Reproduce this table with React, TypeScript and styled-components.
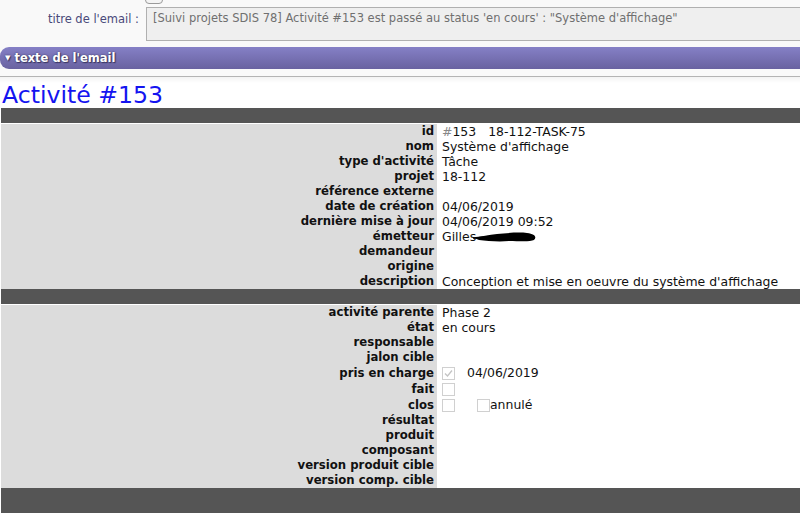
import React from 'react';
import styled, { createGlobalStyle } from 'styled-components';

const GlobalStyle = createGlobalStyle`
  html, body { margin: 0; padding: 0; background: #fff; }
  body { font-family: "DejaVu Sans", Verdana, sans-serif; overflow: hidden; }
`;

type Row = { label: string; value?: React.ReactNode; tall?: boolean };

const Page = styled.div`
  width: 800px;
  height: 513px;
  overflow: hidden;
`;

const Header = styled.div`
  background: #f9f9f9;
  height: 76px;
  border-bottom: 1px solid #b4b4b4;
  position: relative;
`;

const TopButton = styled.div`
  position: absolute;
  left: 145px;
  top: -8px;
  width: 16px;
  height: 10px;
  border: 1px solid #9a9a9a;
  border-radius: 4px;
  background: #f4f4f4;
`;

const FieldRow = styled.div`
  display: flex;
  align-items: flex-start;
  padding-top: 7px;
`;

const FieldLabel = styled.div`
  width: 139px;
  text-align: right;
  padding-right: 7px;
  padding-top: 5px;
  font-size: 11.5px;
  color: #4a4a7a;
  white-space: nowrap;
`;

const FieldBox = styled.div`
  flex: 1;
  height: 34px;
  box-sizing: border-box;
  background: #efefef;
  border: 1px solid #b0b0b0;
  border-right: none;
  padding: 3px 0 0 6px;
  font-size: 11.5px;
  color: #707070;
  white-space: nowrap;
`;

const SectionBar = styled.div`
  margin-top: 6px;
  height: 22px;
  border-radius: 9px 0 0 9px;
  background: linear-gradient(#8580c6, #6962a0);
  color: #fff;
  font-size: 11.5px;
  font-weight: bold;
  display: flex;
  align-items: center;
  gap: 4px;
  padding-left: 5px;
  text-shadow: 0 0 2px #3a3660, 1px 1px 1px #3a3660;
`;

const Caret = styled.span`
  font-size: 7px;
`;

const Fade = styled.div`
  height: 6px;
  background: linear-gradient(#f3f3f3, #fff);
`;

const Title = styled.h1`
  margin: 0 0 0 2px;
  height: 25px;
  font-weight: normal;
  font-size: 23.6px;
  line-height: 24px;
  color: #1414f0;
`;

const Body = styled.div`
  padding: 0 0 0 1px;
`;

const DarkBar = styled.div<{ $h: number }>`
  height: ${p => p.$h}px;
  background: #555555;
`;

const Grid = styled.div`
  display: grid;
  grid-template-columns: 436px 1fr;
  padding-top: 1px;
`;

const Label = styled.div<{ $tall?: boolean }>`
  background: #dcdcdc;
  text-align: right;
  font-weight: bold;
  font-size: 11.7px;
  color: #111;
  padding-right: 3px;
  height: ${p => (p.$tall ? 16 : 15)}px;
  line-height: ${p => (p.$tall ? 16 : 15)}px;
  white-space: nowrap;
`;

const Value = styled.div<{ $tall?: boolean }>`
  background: #fff;
  font-size: 12.45px;
  color: #111;
  padding-left: 5px;
  height: ${p => (p.$tall ? 16 : 15)}px;
  line-height: ${p => (p.$tall ? 16 : 15)}px;
  white-space: nowrap;
  display: flex;
  align-items: center;
`;

const Hash = styled.span`
  color: #888;
`;

const Gap = styled.span<{ $w: number }>`
  display: inline-block;
  width: ${p => p.$w}px;
`;

const Check = styled.span`
  display: inline-block;
  width: 11px;
  height: 11px;
  border: 1px solid #d0d0d0;
  background: #fff;
  position: relative;
  flex: none;
`;

const Redacted = () => (
  <svg width="64" height="14" viewBox="0 0 64 14" style={{ marginLeft: -3 }}>
    <path d="M1 8 C8 6 16 5 24 4 C34 3 46 2 54 3 C62 4 64 7 61 10 C57 12 46 11 36 11 C26 12 14 11 6 10 Z" fill="#000" />
    <path d="M0 8 L22 6" stroke="#000" strokeWidth="1.5" />
  </svg>
);

const CheckBox = ({ checked }: { checked?: boolean }) => (
  <Check>
    {checked && (
      <svg width="11" height="11" viewBox="0 0 11 11" style={{ position: 'absolute', left: 0, top: 0 }}>
        <path d="M2 5.5 L4.5 8 L9 2.5" fill="none" stroke="#c4c4c4" strokeWidth="1.3" />
      </svg>
    )}
  </Check>
);

const first: Row[] = [
  { label: 'id', value: <><Hash>#</Hash>153<Gap $w={12} />18-112-TASK-75</> },
  { label: 'nom', value: "Système d'affichage" },
  { label: "type d'activité", value: 'Tâche' },
  { label: 'projet', value: '18-112' },
  { label: 'référence externe' },
  { label: 'date de création', value: '04/06/2019' },
  { label: 'dernière mise à jour', value: '04/06/2019 09:52' },
  { label: 'émetteur', value: <>Gilles <Redacted /></> },
  { label: 'demandeur' },
  { label: 'origine' },
  { label: 'description', value: "Conception et mise en oeuvre du système d'affichage" },
];

const second: Row[] = [
  { label: 'activité parente', value: 'Phase 2' },
  { label: 'état', value: 'en cours' },
  { label: 'responsable' },
  { label: 'jalon cible' },
  { label: 'pris en charge', tall: true, value: <><CheckBox checked /><Gap $w={12} />04/06/2019</> },
  { label: 'fait', tall: true, value: <CheckBox /> },
  { label: 'clos', tall: true, value: <><CheckBox /><Gap $w={22} /><CheckBox />annulé</> },
  { label: 'résultat' },
  { label: 'produit' },
  { label: 'composant' },
  { label: 'version produit cible' },
  { label: 'version comp. cible' },
];

const Rows = ({ rows }: { rows: Row[] }) => (
  <Grid>
    {rows.map(r => (
      <React.Fragment key={r.label}>
        <Label $tall={r.tall}>{r.label}</Label>
        <Value $tall={r.tall}>{r.value}</Value>
      </React.Fragment>
    ))}
  </Grid>
);

export default function App() {
  return (
    <Page>
      <GlobalStyle />
      <Header>
        <TopButton />
        <FieldRow>
          <FieldLabel>titre de l'email :</FieldLabel>
          <FieldBox>[Suivi projets SDIS 78] Activité #153 est passé au status 'en cours' : "Système d'affichage"</FieldBox>
        </FieldRow>
        <SectionBar><Caret>▼</Caret>texte de l'email</SectionBar>
      </Header>
      <Fade />
      <Title>Activité #153</Title>
      <Body>
        <DarkBar $h={15} />
        <Rows rows={first} />
        <DarkBar $h={15} />
        <Rows rows={second} />
        <DarkBar $h={40} />
      </Body>
    </Page>
  );
}
